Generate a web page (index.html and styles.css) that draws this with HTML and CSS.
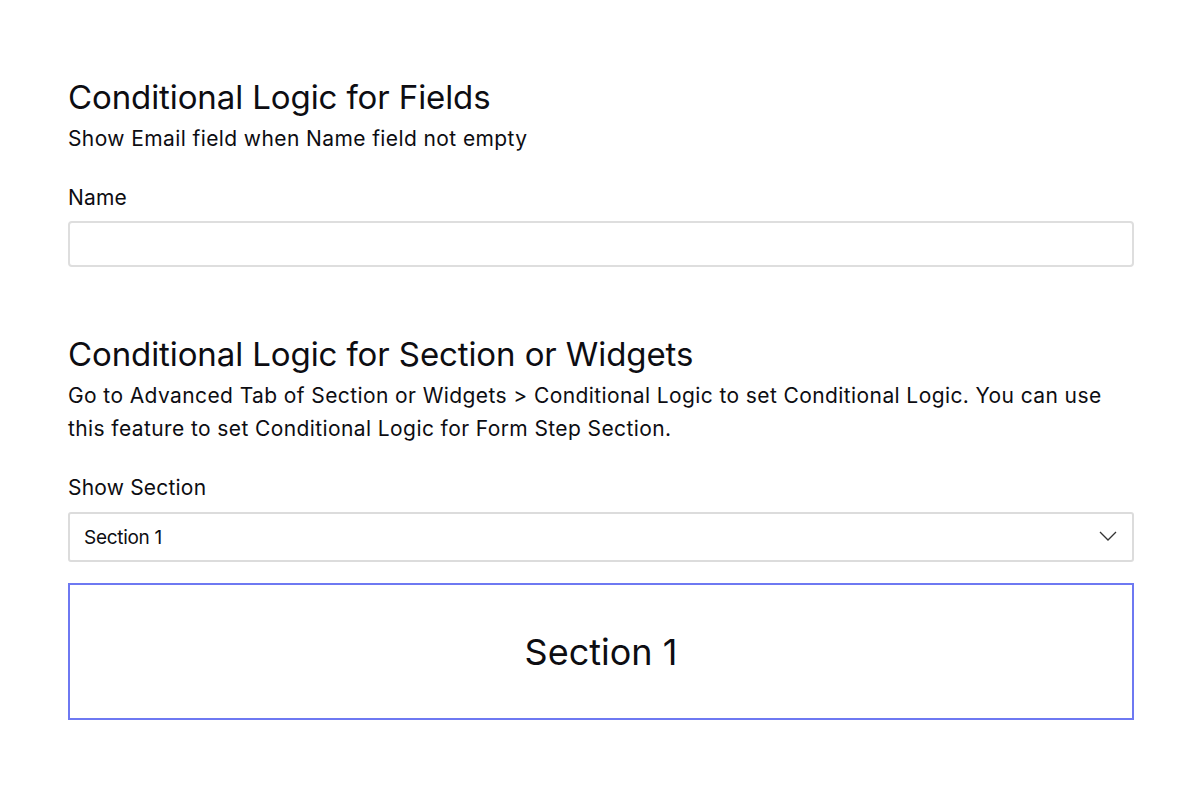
FILE: index.html
```html
<!DOCTYPE html>
<html lang="en">
<head>
<meta charset="utf-8">
<title>Conditional Logic</title>
<link rel="stylesheet" href="styles.css">
</head>
<body>
<main class="page">
  <section class="block">
    <h2 class="title">Conditional Logic for Fields</h2>
    <p class="desc">Show Email field when Name field not empty</p>
    <label class="label">Name</label>
    <div class="input"></div>
  </section>
  <section class="block second">
    <h2 class="title">Conditional Logic for Section or Widgets</h2>
    <p class="desc">Go to Advanced Tab of Section or Widgets &gt; Conditional Logic to set Conditional Logic. You can use this feature to set Conditional Logic for Form Step Section.</p>
    <label class="label">Show Section</label>
    <div class="select">
      <span class="select-text">Section 1</span>
      <svg class="chevron" width="18" height="10" viewBox="0 0 18 10"><path d="M1 1l8 8 8-8" fill="none" stroke="#333" stroke-width="1.3"/></svg>
    </div>
    <div class="section-box">Section 1</div>
  </section>
</main>
</body>
</html>
```
FILE: styles.css
```css
* { box-sizing: border-box; }
body {
  margin: 0;
  background: #fff;
  font-family: Inter, "Noto Sans", sans-serif;
  color: #0d0d12;
}
.page {
  padding: 76px 66px 0 68px;
}
.block { display: flex; flex-direction: column; }
.second { margin-top: 66px; }
.title {
  margin: 0;
  font-size: 33px;
  font-weight: 400;
  line-height: 42px;
  letter-spacing: -0.1px;
}
.desc {
  margin: 4px 0 0;
  font-size: 21px;
  line-height: 33px;
  letter-spacing: 0.4px;
}
.label {
  margin-top: 28px;
  font-size: 21px;
  line-height: 30px;
  letter-spacing: 0.2px;
}
.input {
  margin-top: 8px;
  height: 46px;
  border: 2px solid #dedede;
  border-radius: 4px;
}
.select {
  margin-top: 9px;
  height: 50px;
  border: 2px solid #dcdcdc;
  border-radius: 3px;
  display: flex;
  align-items: center;
  justify-content: space-between;
  padding: 0 15px 0 14px;
}
.select-text {
  font-size: 19px;
  letter-spacing: -0.3px;
}
.chevron { margin-top: -2px; }
.section-box {
  margin-top: 21px;
  height: 137px;
  border: 2px solid #6e79f2;
  display: flex;
  align-items: center;
  justify-content: center;
  font-size: 36px;
}
```
